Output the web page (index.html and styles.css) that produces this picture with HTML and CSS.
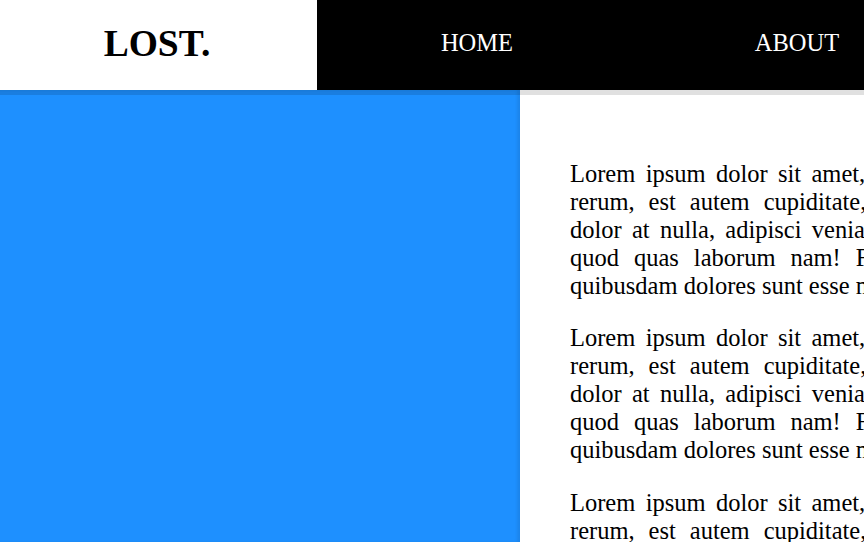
FILE: index.html
```html
<!DOCTYPE html>
<html lang="en">
<head>
<meta charset="utf-8">
<title>LOST.</title>
<link rel="stylesheet" href="styles.css">
</head>
<body>
<header class="header">
  <div class="logo">LOST.</div>
  <nav class="nav">
    <a class="nav-item" href="#">HOME</a>
    <a class="nav-item" href="#">ABOUT</a>
    <a class="nav-item" href="#">CONTACT</a>
  </nav>
</header>
<main class="main">
  <aside class="side"></aside>
  <section class="content">
    <p>Lorem ipsum dolor sit amet, consectetur adipisicing elit. Quisquam, rerum, est autem cupiditate, corporis a qui libero ipsum delectus dolor&nbsp;at nulla, adipisci veniam in reiciendis aut asperiores blanditiis quod quas laborum nam! Fuga ad tempora in aspernatur minus, quibusdam dolores sunt esse magni, ut, dignissimos.</p>
    <p>Lorem ipsum dolor sit amet, consectetur adipisicing elit. Quisquam, rerum, est autem cupiditate, corporis a qui libero ipsum delectus dolor&nbsp;at nulla, adipisci veniam in reiciendis aut asperiores blanditiis quod quas laborum nam! Fuga ad tempora in aspernatur minus, quibusdam dolores sunt esse magni, ut, dignissimos.</p>
    <p>Lorem ipsum dolor sit amet, consectetur adipisicing elit. Quisquam, rerum, est autem cupiditate, corporis a qui libero ipsum delectus dolor&nbsp;at nulla, adipisci veniam in reiciendis aut asperiores blanditiis quod quas laborum nam! Fuga ad tempora in aspernatur minus, quibusdam dolores sunt esse magni, ut, dignissimos.</p>
  </section>
</main>
</body>
</html>
```
FILE: styles.css
```css
html, body {
  margin: 0;
  padding: 0;
  overflow: hidden;
}
body {
  font-family: "Liberation Serif", "Times New Roman", serif;
  font-size: 24.5px;
  color: #000;
  background: #fff;
  width: 864px;
  height: 542px;
}
.header {
  display: flex;
  height: 90px;
  position: relative;
  z-index: 2;
  box-shadow: 0 5px 0 rgba(0, 0, 0, 0.12);
}
.logo {
  flex: 0 0 317px;
  display: flex;
  align-items: center;
  justify-content: center;
  padding: 0 3px 4px 0;
  box-sizing: border-box;
  background: #fff;
  font-weight: bold;
  font-size: 37.5px;
}
.nav {
  flex: 0 0 960px;
  display: flex;
  background: #000;
}
.nav-item {
  flex: 0 0 320px;
  display: flex;
  align-items: center;
  justify-content: center;
  padding-bottom: 4px;
  box-sizing: border-box;
  color: #fff;
  text-decoration: none;
  font-size: 24.5px;
}
.main {
  display: flex;
  width: 1400px;
}
.side {
  flex: 0 0 520px;
  height: 452px;
  background: #1e90ff;
  box-shadow: inset -3px 0 3px rgba(0, 0, 0, 0.08);
}
.content {
  flex: 0 0 700px;
  padding: 45px 50px 0 50px;
}
.content p {
  margin: 24.5px 0;
  line-height: 28px;
  text-align: justify;
}
```
